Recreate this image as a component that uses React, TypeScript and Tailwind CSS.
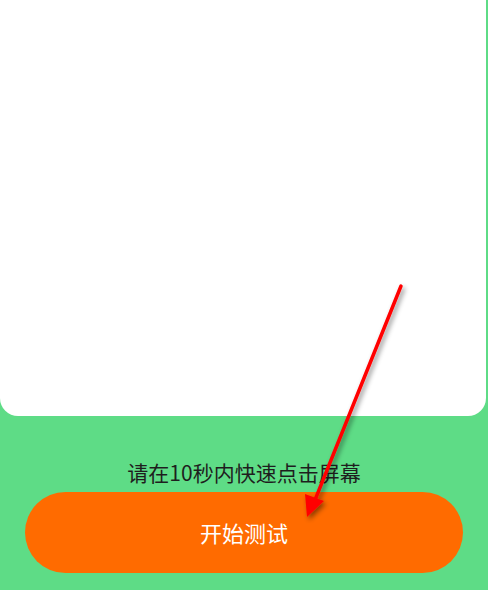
const cjk = { fontFamily: '"Noto Sans CJK SC", "Noto Sans", sans-serif' }

function Arrow() {
  return (
    <svg className="pointer-events-none absolute inset-0" width="488" height="590" viewBox="0 0 488 590">
      <defs>
        <filter id="shadow" x="-50%" y="-50%" width="200%" height="200%">
          <feDropShadow dx="2" dy="3" stdDeviation="2.5" floodColor="#000" floodOpacity="0.45" />
        </filter>
      </defs>
      <g filter="url(#shadow)">
        <line x1="401" y1="286" x2="315" y2="500" stroke="#ff0000" strokeWidth="3.5" strokeLinecap="round" />
        <polygon points="307,517 305,494 324,501" fill="#ff0000" />
      </g>
    </svg>
  )
}

export default function App() {
  return (
    <div className="relative flex h-[590px] w-[488px] flex-col bg-[#5edc86]" style={cjk}>
      <div className="mr-[2px] h-[416px] shrink-0 rounded-b-[18px] bg-white" />
      <p className="mt-[42px] text-center text-[21px] leading-[28px] text-[#1e1e1e]">请在10秒内快速点击屏幕</p>
      <button
        type="button"
        className="mx-[25px] mt-[6px] flex h-[81px] items-center justify-center rounded-full bg-[#ff6b00] text-[22px] text-white"
      >
        开始测试
      </button>
      <Arrow />
    </div>
  )
}
